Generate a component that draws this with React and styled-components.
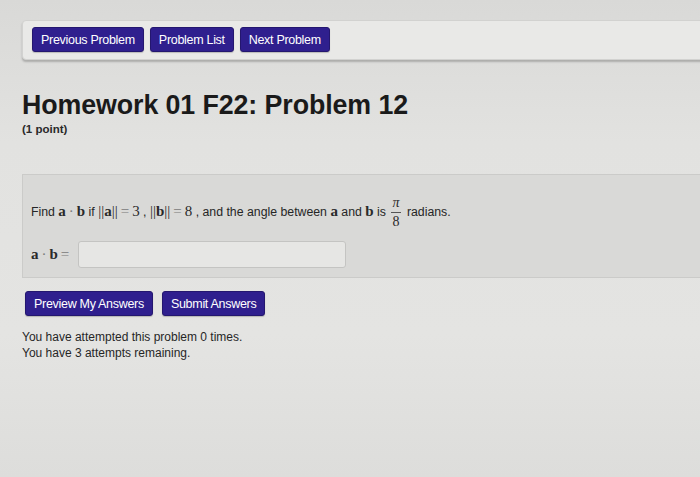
import React from "react";
import styled, { createGlobalStyle } from "styled-components";

const GlobalStyle = createGlobalStyle`
  html, body {
    margin: 0;
    padding: 0;
    background: #dfdfdd;
  }
  body {
    font-family: "Liberation Sans", Arial, sans-serif;
    color: #1e1e1e;
  }
`;

const Page = styled.div`
  width: 700px;
  height: 477px;
  overflow: hidden;
  padding: 20px 0 0 22px;
  box-sizing: border-box;
  background: linear-gradient(180deg, #d9d9d7 0%, #e2e2e0 30%, #e4e4e2 70%, #dddddb 100%);
`;

const NavBar = styled.div`
  display: flex;
  gap: 6px;
  align-items: center;
  padding: 6px 8px 7px 9px;
  margin-right: -10px;
  background: #e9e9e7;
  border: 1px solid #d2d2d0;
  border-radius: 4px 0 0 4px;
  box-shadow: 0 2px 2px rgba(0, 0, 0, 0.22);
`;

const Button = styled.button`
  font-family: "Liberation Sans", Arial, sans-serif;
  font-size: 12.5px;
  letter-spacing: -0.3px;
  color: #ffffff;
  background: #2f1f8e;
  border: 1px solid #24176f;
  border-radius: 3px;
  padding: 0 8px;
  height: 25px;
  cursor: pointer;
  box-shadow: 0 1px 1px rgba(0, 0, 0, 0.2);
`;

const Title = styled.h1`
  font-size: 26.8px;
  font-weight: bold;
  margin: 30px 0 0 0;
  letter-spacing: -0.1px;
  color: #1a1a1a;
`;

const Points = styled.div`
  font-size: 11.5px;
  font-weight: bold;
  color: #2a2a2a;
  margin-top: 2px;
`;

const ProblemPanel = styled.div`
  margin-top: 39px;
  margin-right: -10px;
  padding: 21px 10px 9px 8px;
  background: #d9d9d7;
  border: 1px solid #cbcbc9;
  border-right: none;
`;

const Statement = styled.div`
  display: flex;
  align-items: center;
  font-size: 12.3px;
  color: #262626;
  white-space: pre;
`;

const M = styled.span`
  font-family: "Liberation Serif", "DejaVu Serif", serif;
  font-size: 15px;
  font-weight: ${(p) => (p.$bold ? "bold" : "normal")};
  color: #2a2a2a;
`;

const Op = styled.span`
  font-family: "Liberation Serif", serif;
  font-size: 15px;
  color: #7a7a7a;
  margin: 0 3px;
`;

const Frac = styled.span`
  display: inline-flex;
  flex-direction: column;
  align-items: center;
  margin: 0 6px 0 5px;
  font-family: "Liberation Serif", serif;
  font-size: 14px;
  line-height: 12px;
  color: #2a2a2a;
  transform: translateY(1px);
`;

const Pi = styled.span`
  font-style: italic;
`;

const FracLine = styled.span`
  width: 10px;
  height: 1px;
  background: #555;
  margin: 3px 0;
`;

const AnswerRow = styled.div`
  display: flex;
  align-items: center;
  margin-top: 14px;
`;

const AnswerInput = styled.input`
  width: 268px;
  height: 27px;
  box-sizing: border-box;
  margin-left: 6px;
  background: #e6e6e4;
  border: 1px solid #c4c4c2;
  border-radius: 3px;
`;

const Actions = styled.div`
  display: flex;
  gap: 9px;
  margin-top: 13px;
  margin-left: 3px;
`;

const Note = styled.div`
  font-size: 12px;
  line-height: 16px;
  color: #262626;
  margin-top: 13px;
`;

export default function App() {
  return (
    <>
      <GlobalStyle />
      <Page>
        <NavBar>
          <Button>Previous Problem</Button>
          <Button>Problem List</Button>
          <Button>Next Problem</Button>
        </NavBar>
        <Title>Homework 01 F22: Problem 12</Title>
        <Points>(1 point)</Points>
        <ProblemPanel>
          <Statement>
            {"Find "}
            <M $bold>a</M>
            <Op>·</Op>
            <M $bold>b</M>
            {" if "}
            <M>||</M>
            <M $bold>a</M>
            <M>||</M>
            <Op>=</Op>
            <M>3</M>
            {" , "}
            <M>||</M>
            <M $bold>b</M>
            <M>||</M>
            <Op>=</Op>
            <M>8</M>
            {" , and the angle between "}
            <M $bold>a</M>
            {" and "}
            <M $bold>b</M>
            {" is"}
            <Frac>
              <Pi>π</Pi>
              <FracLine />
              <span>8</span>
            </Frac>
            {"radians."}
          </Statement>
          <AnswerRow>
            <M $bold>a</M>
            <Op>·</Op>
            <M $bold>b</M>
            <Op>=</Op>
            <AnswerInput type="text" />
          </AnswerRow>
        </ProblemPanel>
        <Actions>
          <Button>Preview My Answers</Button>
          <Button>Submit Answers</Button>
        </Actions>
        <Note>
          You have attempted this problem 0 times.
          <br />
          You have 3 attempts remaining.
        </Note>
      </Page>
    </>
  );
}
